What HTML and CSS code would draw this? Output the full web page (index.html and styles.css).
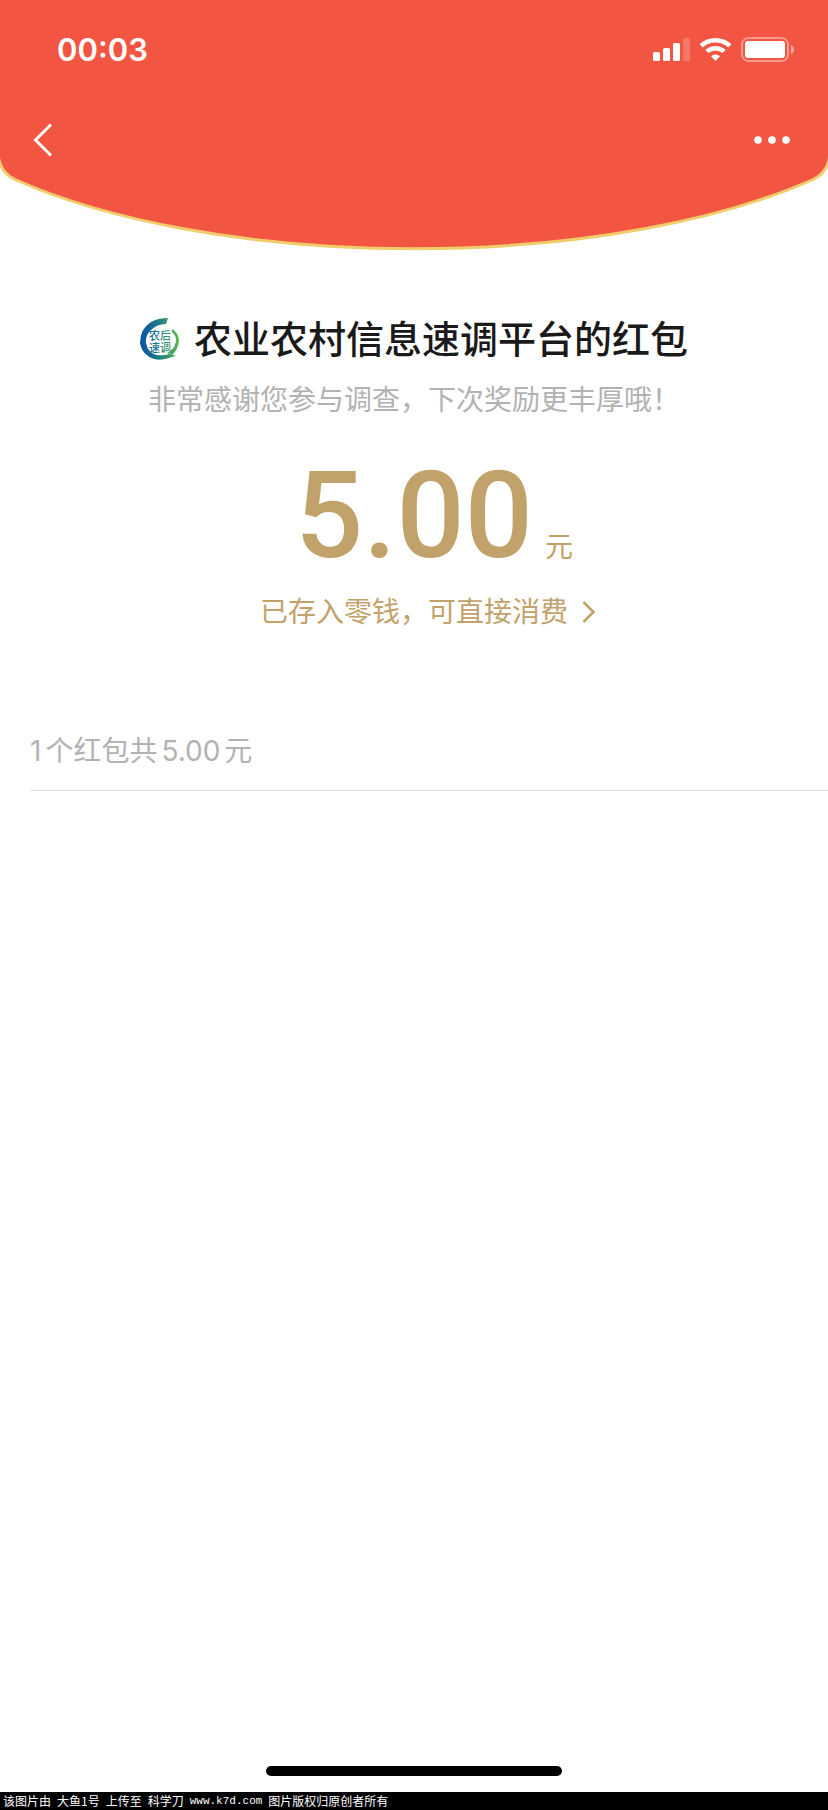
FILE: index.html
```html
<!DOCTYPE html>
<html lang="zh-CN">
<head>
    <meta charset="UTF-8">
    <meta name="viewport" content="width=device-width, initial-scale=1.0">
    <title>红包详情</title>
    <link rel="stylesheet" href="styles.css">
</head>
<body>
    <header class="header">
        <div class="status-bar">
            <span class="time">00:03</span>
            <svg class="status-icons" width="142" height="26" viewBox="0 0 142 26" fill="#fff" aria-hidden="true">
                <!-- signal -->
                <rect x="1" y="16" width="7" height="9" rx="1.5"/>
                <rect x="11" y="12" width="7" height="13" rx="1.5"/>
                <rect x="21" y="7" width="7" height="18" rx="1.5"/>
                <rect x="31" y="2" width="7" height="23" rx="1.5" opacity="0.2"/>
                <!-- wifi -->
                <path d="M47.6 8.2 A23.5 23.5 0 0 1 79.4 8.2 L76.2 11.4 A18.8 18.8 0 0 0 50.8 11.4 Z"/>
                <path d="M53.3 13.9 A15 15 0 0 1 73.7 13.9 L70.4 17.1 A10.4 10.4 0 0 0 56.6 17.1 Z"/>
                <path d="M59 20.2 A6.6 6.6 0 0 1 68 20.2 L63.5 25 Z"/>
                <!-- battery -->
                <rect x="90" y="2" width="46" height="23" rx="6.5" fill="none" stroke="#fff" stroke-width="2" opacity="0.4"/>
                <rect x="93" y="5" width="40" height="17" rx="3"/>
                <path d="M139 9 Q142 10.5 142 13.5 Q142 16.5 139 18 Z" opacity="0.5"/>
            </svg>
        </div>
        <nav class="nav-bar">
            <button class="icon-btn" type="button" aria-label="返回">
                <svg width="20" height="36" viewBox="0 0 20 36" fill="none" stroke="#fff" stroke-width="3">
                    <path d="M18 2.5 L2.5 18 L18 33.5"/>
                </svg>
            </button>
            <button class="icon-btn" type="button" aria-label="更多">
                <svg width="38" height="36" viewBox="0 0 38 36" fill="#fff">
                    <circle cx="4" cy="18" r="3.8"/>
                    <circle cx="18" cy="18" r="3.8"/>
                    <circle cx="32" cy="18" r="3.8"/>
                </svg>
            </button>
        </nav>
    </header>
    <svg class="curve" viewBox="0 0 828 93" aria-hidden="true">
        <path d="M-2 -4 L-1 2 Q2 15 15 21.5 A520 193 0 0 0 813 21.5 Q826 15 829 2 L830 -4 Z" fill="#f35543" stroke="#f0cc6b" stroke-width="3"/>
    </svg>

    <main class="content">
        <h1 class="sender">
            <svg class="logo" width="40" height="42" viewBox="0 0 40 42" fill="url(#logoFill)" aria-hidden="true">
                <defs>
                    <linearGradient id="logoFill" gradientUnits="userSpaceOnUse" x1="0" y1="0" x2="39" y2="0">
                        <stop offset="0" stop-color="#0b4fa8"/>
                        <stop offset="0.5" stop-color="#1f7f86"/>
                        <stop offset="1" stop-color="#5cb947"/>
                    </linearGradient>
                </defs>
                <path d="M28 0 L26 6 Q17 6 11 12 Q5 18 6 25 Q8 35 17 37 Q23 38 29 36 L26 34 L36 38 L32 39 Q22 43 14 41 Q2 37 0 25 Q0 11 11 4 Q18 0 28 0 Z"/>
                <path d="M32 11 Q39 15 39 23 Q38 32 32 37 L29 34 Q36 29 36 22 Q36 17 32 14 Z"/>
                <text class="logo-text" x="9" y="22">农后</text>
                <text class="logo-text" x="9" y="34">速调</text>
            </svg>
            <span>农业农村信息速调平台的红包</span>
        </h1>
        <p class="greeting">非常感谢您参与调查，下次奖励更丰厚哦！</p>
        <div class="amount">
            <span class="number">5.00</span>
            <span class="unit">元</span>
        </div>
        <a class="balance-link" href="#">
            <span class="balance-text">已存入零钱，可直接消费</span>
            <svg class="chevron" width="14" height="24" viewBox="0 0 14 24" fill="none" stroke="#c2a26b" stroke-width="2.6" aria-hidden="true">
                <path d="M1.5 2 L11.5 12 L1.5 22"/>
            </svg>
        </a>
    </main>

    <section class="summary"><span class="count">1</span>个红包共<span class="total">5.00</span>元</section>

    <div class="home-indicator"></div>
    <footer class="credit">
        <span>该图片由</span>
        <span>大鱼1号</span>
        <span>上传至</span>
        <span>科学刀</span>
        <span class="site">www.k7d.com</span>
        <span>图片版权归原创者所有</span>
    </footer>
</body>
</html>
```

FILE: styles.css
```css
* {
    box-sizing: border-box;
}

body {
    margin: 0;
    min-height: 100vh;
    display: flex;
    flex-direction: column;
    background: #fff;
    font-family: Inter, "Noto Sans CJK SC", sans-serif;
    font-size: 28px;
    line-height: 40px;
}

.header {
    background: #f35543;
    color: #fff;
}

.status-bar {
    display: flex;
    align-items: center;
    justify-content: space-between;
    height: 98px;
    padding: 0 34px 0 57px;
}

.time {
    padding-top: 2px;
    font-size: 31px;
    font-weight: 600;
}

.nav-bar {
    display: flex;
    justify-content: space-between;
    padding: 24px 36px 0 33px;
}

.icon-btn {
    display: flex;
    padding: 0;
    border: 0;
    background: none;
    cursor: pointer;
}

.curve {
    display: block;
    width: 100%;
}

.content {
    padding-top: 60px;
    text-align: center;
}

.sender {
    display: flex;
    align-items: center;
    justify-content: center;
    gap: 14px;
    margin: 0;
    font-size: 38px;
    font-weight: 500;
    line-height: 56px;
    color: #1a1a1a;
}

.logo-text {
    font-family: "Liberation Sans", "Noto Sans CJK SC", sans-serif;
    font-size: 11px;
    font-weight: 500;
}

.greeting {
    margin: 13px 0 0;
    color: #b2b2b2;
}

/* the number stays centred, the unit hangs on its right */
.amount,
.balance-link {
    display: grid;
    grid-template-columns: 1fr auto 1fr;
    color: #c2a26b;
}

.amount {
    align-items: baseline;
    margin-top: 26px;
}

.number {
    grid-column: 2;
    font-family: Roboto, sans-serif;
    font-size: 120px;
    font-weight: 500;
    line-height: 140px;
}

.unit {
    padding-left: 12px;
    text-align: left;
}

.balance-link {
    align-items: center;
    margin-top: 6px;
    text-decoration: none;
}

.balance-text {
    grid-column: 2;
}

.chevron {
    margin-left: 14px;
}

.summary {
    margin: 99px 0 0 30px;
    padding-bottom: 19px;
    border-bottom: 1px solid #e2e2e2;
    color: #b2b2b2;
}

.count {
    margin-right: 4px;
}

.total {
    margin: 0 4px;
}

.home-indicator {
    width: 296px;
    height: 10px;
    margin: auto auto 16px;
    border-radius: 5px;
    background: #000;
}

.credit {
    display: flex;
    gap: 6px;
    padding-left: 3px;
    background: #000;
    color: #fff;
    font-family: "Noto Sans CJK SC", sans-serif;
    font-size: 12px;
    line-height: 18px;
}

.site {
    font-family: "Liberation Mono", monospace;
    font-size: 11px;
}
```
